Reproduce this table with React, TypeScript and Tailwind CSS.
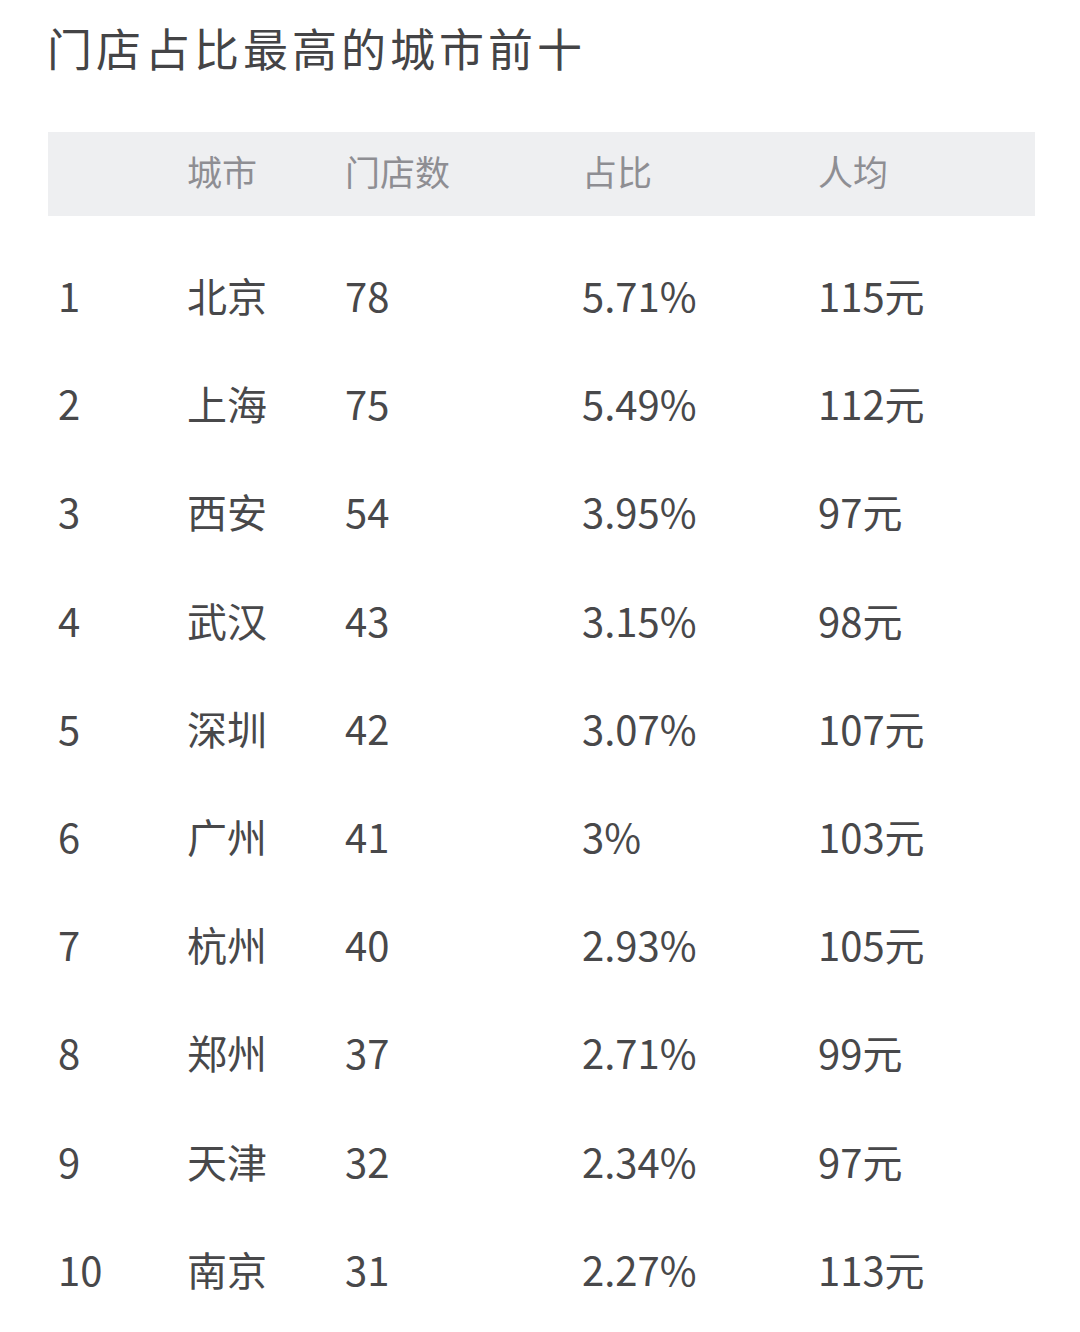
import React from "react";

const rows: [string, string, string, string, string][] = [
  ["1", "北京", "78", "5.71%", "115元"],
  ["2", "上海", "75", "5.49%", "112元"],
  ["3", "西安", "54", "3.95%", "97元"],
  ["4", "武汉", "43", "3.15%", "98元"],
  ["5", "深圳", "42", "3.07%", "107元"],
  ["6", "广州", "41", "3%", "103元"],
  ["7", "杭州", "40", "2.93%", "105元"],
  ["8", "郑州", "37", "2.71%", "99元"],
  ["9", "天津", "32", "2.34%", "97元"],
  ["10", "南京", "31", "2.27%", "113元"],
];

export default function App() {
  return (
    <div
      className="w-[1080px] h-[1332px] bg-white overflow-hidden"
      style={{ fontFamily: '"Noto Sans CJK SC", "Noto Sans", sans-serif' }}
    >
      <div className="pt-[16px] pl-[47px] h-[132px]">
        <h1 className="text-[45px] leading-[64px] tracking-[4px] font-normal text-[#444446]">
          门店占比最高的城市前十
        </h1>
      </div>
      <div className="ml-[48px] w-[987px]">
        <div className="h-[84px] pb-[5px] bg-[#eeeff1] pl-[10px] grid grid-cols-[129px_158px_237px_236px_1fr] items-center text-[35px] font-normal text-[#8e8e93]">
          <div></div>
          <div>城市</div>
          <div>门店数</div>
          <div>占比</div>
          <div>人均</div>
        </div>
        <div className="pt-[25px]">
          {rows.map((r) => (
            <div
              key={r[0]}
              className="h-[108.2px] pl-[10px] grid grid-cols-[129px_158px_237px_236px_1fr] items-center text-[40px] font-normal text-[#48484a]"
            >
              <div>{r[0]}</div>
              <div>{r[1]}</div>
              <div>{r[2]}</div>
              <div>{r[3]}</div>
              <div>{r[4]}</div>
            </div>
          ))}
        </div>
      </div>
    </div>
  );
}
